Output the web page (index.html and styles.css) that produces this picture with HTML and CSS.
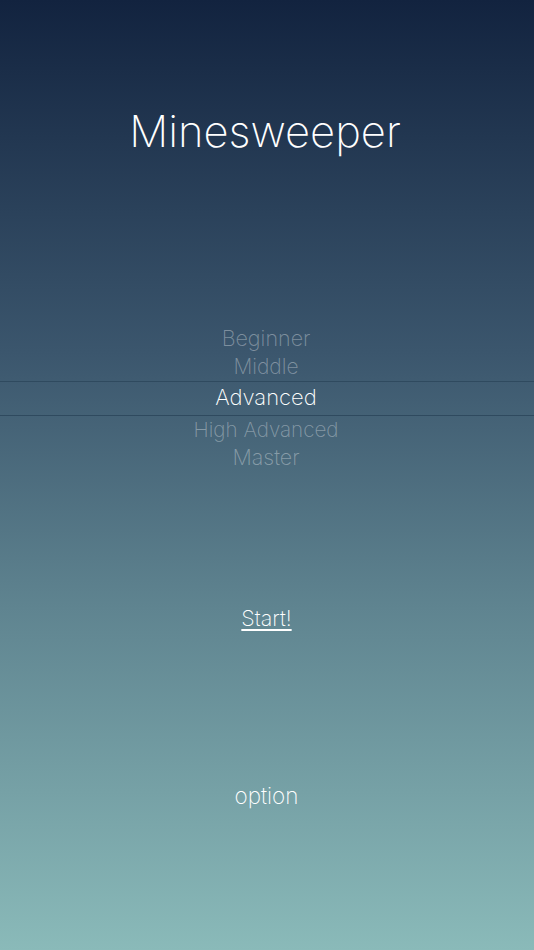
FILE: index.html
```html
<!DOCTYPE html>
<html lang="en">
<head>
    <meta charset="UTF-8">
    <meta name="viewport" content="width=device-width, initial-scale=1.0">
    <title>Minesweeper</title>
    <link rel="stylesheet" href="styles.css">
</head>
<body>
    <div class="screen">
        <h1 class="title">Minesweeper</h1>

        <div class="picker">
            <div class="level far">Beginner</div>
            <div class="level near">Middle</div>
            <div class="level current">Advanced</div>
            <div class="level near below">High Advanced</div>
            <div class="level far">Master</div>
        </div>

        <a class="start" href="#">Start!</a>
        <a class="option" href="#">option</a>
    </div>
</body>
</html>
```

FILE: styles.css
```css
html, body {
    margin: 0;
    padding: 0;
}
body {
    font-family: "Inter", "Liberation Sans", sans-serif;
    font-weight: 200;
    color: white;
}
a {
    color: white;
}
.screen {
    width: 534px;
    height: 950px;
    overflow: hidden;
    display: flex;
    flex-direction: column;
    align-items: center;
    background: linear-gradient(to bottom, #12233f 0%, #3b566d 37%, #5f8490 64%, #8abab9 100%);
}
.title {
    margin: 100px 4px 0 0;
    height: 62px;
    line-height: 62px;
    font-size: 43.5px;
    font-weight: 200;
}
.picker {
    width: 100%;
    margin-top: 162px;
    display: flex;
    flex-direction: column;
    align-items: center;
}
.level {
    width: 100%;
    padding-right: 2px;
    box-sizing: border-box;
    text-align: center;
}
.far {
    height: 28px;
    line-height: 28px;
    font-size: 21.5px;
    color: rgba(255, 255, 255, 0.35);
}
.near {
    height: 29px;
    line-height: 29px;
    font-size: 21px;
    color: rgba(255, 255, 255, 0.35);
}
.below {
    height: 27px;
    line-height: 27px;
    font-size: 20.6px;
}
.current {
    height: 35px;
    line-height: 31px;
    font-size: 22px;
    color: white;
    border-top: 1px solid #2f4a5f;
    border-bottom: 1px solid #2f4a5f;
}
.start {
    margin: 132px 1px 0 0;
    font-size: 21.5px;
    line-height: 30px;
    text-underline-offset: 3px;
}
.option {
    margin: 148px 1px 0 0;
    font-size: 22.5px;
    line-height: 30px;
    text-decoration: none;
}
```
